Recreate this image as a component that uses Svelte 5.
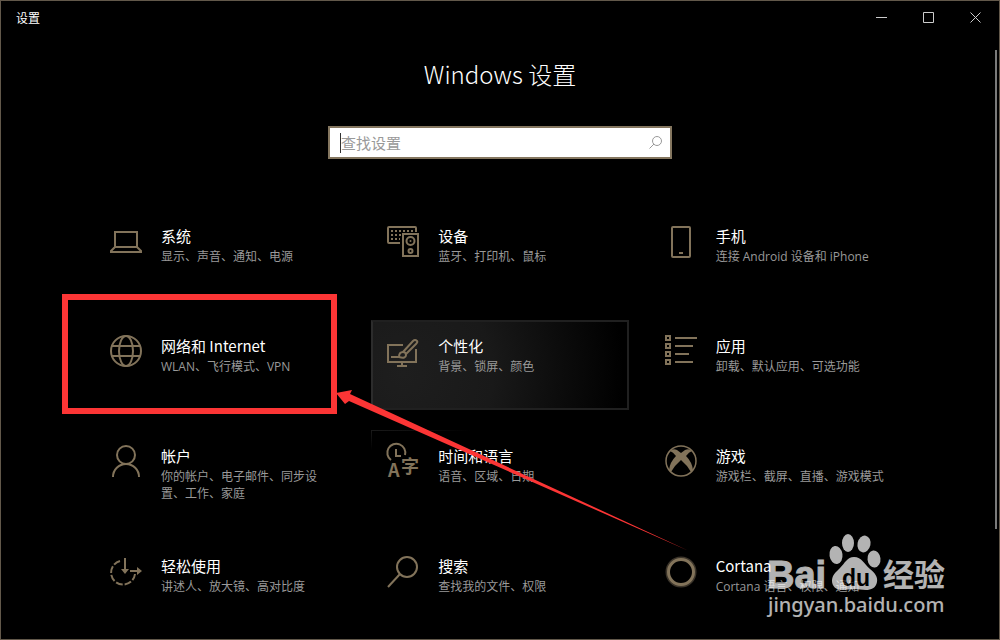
<script lang="ts">
  interface Category {
    icon: string;
    title: string;
    detail: string;
    state?: 'hover' | 'near';
  }

  const categories: Category[] = [
    { icon: 'system', title: '系统', detail: '显示、声音、通知、电源' },
    { icon: 'devices', title: '设备', detail: '蓝牙、打印机、鼠标' },
    { icon: 'phone', title: '手机', detail: '连接 Android 设备和 iPhone' },
    { icon: 'network', title: '网络和 Internet', detail: 'WLAN、飞行模式、VPN' },
    { icon: 'personalize', title: '个性化', detail: '背景、锁屏、颜色', state: 'hover' },
    { icon: 'apps', title: '应用', detail: '卸载、默认应用、可选功能' },
    { icon: 'accounts', title: '帐户', detail: '你的帐户、电子邮件、同步设置、工作、家庭' },
    { icon: 'time', title: '时间和语言', detail: '语音、区域、日期', state: 'near' },
    { icon: 'gaming', title: '游戏', detail: '游戏栏、截屏、直播、游戏模式' },
    { icon: 'ease', title: '轻松使用', detail: '讲述人、放大镜、高对比度' },
    { icon: 'search', title: '搜索', detail: '查找我的文件、权限' },
    { icon: 'cortana', title: 'Cortana', detail: 'Cortana 语言、权限、通知' }
  ];

  let query = $state('');
</script>

{#snippet categoryIcon(name: string)}
  <svg class="icon" viewBox="0 0 32 32" aria-hidden="true">
    {#if name === 'system'}
      <path d="M5 6h22v15H5zM5 21l-4 4v1h30v-1l-4-4" />
    {:else if name === 'devices'}
      <path d="M13 17H2a1 1 0 0 1-1-1V2a1 1 0 0 1 1-1h26a1 1 0 0 1 1 1v4" />
      <path d="M4 5h23M4 9h10M4 13h2M8 13h5" stroke-dasharray="2 2" />
      <path d="M16 8h15v22H16z" />
      <circle cx="23.5" cy="15" r="4" />
      <circle cx="23.5" cy="15" r="1" class="solid" />
      <circle cx="23.5" cy="25" r="2" />
    {:else if name === 'phone'}
      <rect x="7" y="1" width="18" height="30" rx="1" />
      <path d="M14 27h4" />
    {:else if name === 'network'}
      <circle cx="16" cy="15" r="15" />
      <ellipse cx="16" cy="15" rx="7" ry="15" />
      <path d="M2 10h28M2 20h28" />
    {:else if name === 'personalize'}
      <path d="M16 9H1v17h28V13M15 26v4M10 30h10M4 21h8" />
      <path d="M16 16L26 5q2-2 4 0 1 1-1 3L19 18" />
      <path d="M12 21q0-5 4-5 3 0 3 3 0 4-7 2z" />
    {:else if name === 'apps'}
      {#each [0, 8, 16, 24] as y}
        <rect x="1" {y} width="4" height="4" />
      {/each}
      <path d="M10 2h22M10 10h18M10 18h14M10 26h18" />
    {:else if name === 'accounts'}
      <circle cx="16" cy="9" r="9" />
      <path d="M3 31a13 13 0 0 1 26 0" />
    {:else if name === 'time'}
      <path d="M4 14a9 9 0 1 1 14-5M9 3v7h5" />
      <text x="1" y="31" font-size="18">A</text>
      <text x="14" y="27" font-size="18">字</text>
    {:else if name === 'gaming'}
      <circle cx="16" cy="15" r="15" class="thin" />
      <path class="fill" d="M5 5q3-3 7-1l4 3 4-3q4-2 7 1-3 1-6 5 6 6 7 14-1 2-2 2-4-7-10-12Q10 19 6 26q-1 0-2-2 1-8 7-14Q8 6 5 5z" />
    {:else if name === 'ease'}
      <path d="M10 5A12 12 0 1 0 25 18" stroke-dasharray="7 2" />
      <path d="M15 2v12M20 15h8" />
      <path class="fill" d="M11 13h8l-4 5zM27 11v8l5-4z" />
    {:else if name === 'search'}
      <circle cx="20" cy="11" r="10" />
      <path d="M13 18L1 31" />
    {:else}
      <circle cx="16" cy="16" r="14" class="halo" />
      <circle cx="16" cy="16" r="12.5" class="ring" />
    {/if}
  </svg>
{/snippet}

<div class="window">
  <header class="titlebar">
    <span class="app-name">设置</span>
    <div class="controls">
      <button aria-label="最小化">
        <svg viewBox="0 0 11 11"><path d="M0 5.5h11" /></svg>
      </button>
      <button aria-label="最大化">
        <svg viewBox="0 0 11 11"><path d="M.5.5h10v10H.5z" /></svg>
      </button>
      <button aria-label="关闭">
        <svg viewBox="0 0 11 11"><path d="M.5.5l10 10M10.5.5l-10 10" /></svg>
      </button>
    </div>
  </header>

  <main>
    <h1>Windows 设置</h1>

    <label class="search">
      <span class="caret"></span>
      <input type="text" placeholder="查找设置" aria-label="查找设置" bind:value={query} />
      <svg viewBox="0 0 13 13" aria-hidden="true">
        <circle cx="8" cy="5" r="4.5" />
        <path d="M5 8L.5 12.5" />
      </svg>
    </label>

    <nav class="grid">
      {#each categories as category}
        <a class="card {category.state ?? ''}" href="#{category.icon}">
          {@render categoryIcon(category.icon)}
          <span class="text">
            <span class="title">{category.title}</span>
            <span class="detail">{category.detail}</span>
          </span>
        </a>
      {/each}

      <!-- Callout drawn over the network category -->
      <span class="callout"></span>
      <svg class="arrow" viewBox="0 0 356 164" aria-hidden="true">
        <path d="M1 5L17 2 15 6 354 163 14 13 10 16z" />
      </svg>
    </nav>
  </main>

  <span class="scrollbar"></span>

  <svg class="watermark" viewBox="0 0 186 92" role="img" aria-label="Baidu 经验">
    <g>
      <text class="bai" x="3" y="58">Bai</text>
      <ellipse cx="72" cy="25" rx="6.5" ry="9" transform="rotate(-8 72 25)" />
      <ellipse cx="84" cy="13" rx="6" ry="9" />
      <ellipse cx="100" cy="14" rx="6.5" ry="8.5" transform="rotate(12 100 14)" />
      <ellipse cx="110" cy="29" rx="6.5" ry="8.5" transform="rotate(-6 110 29)" />
      <path d="M90 27c8 0 10 7 16 12 5 4 8 8 7 13-1 6-6 8-11 8-4 0-8-1-12-1s-8 1-12 1c-6 0-10-4-10-9 0-6 4-9 8-13 5-5 7-11 14-11z" />
      <text class="du" x="78" y="56">du</text>
      <text class="jingyan" x="119" y="56">经验</text>
      <text class="url" x="4" y="82">jingyan.baidu.com</text>
    </g>
  </svg>
</div>

<style>
  :global(body) {
    margin: 0;
    background: #000;
  }

  .window {
    position: relative;
    box-sizing: border-box;
    min-height: 100vh;
    border: 1px solid #62584a;
    background: #000;
    color: #fff;
    font-family: 'Noto Sans CJK SC', 'Noto Sans', sans-serif;
  }

  .titlebar {
    display: flex;
    align-items: center;
    justify-content: space-between;
    height: 32px;
    padding-left: 15px;
  }

  .app-name {
    font-size: 12px;
  }

  .controls {
    display: flex;
  }

  .controls button {
    display: flex;
    align-items: center;
    justify-content: center;
    width: 47px;
    height: 32px;
    padding: 0;
    border: none;
    background: transparent;
  }

  .controls svg {
    width: 11px;
    height: 11px;
    fill: none;
    stroke: #ccc;
  }

  main {
    display: flex;
    flex-direction: column;
    align-items: center;
    padding: 23px 16px 8px;
  }

  h1 {
    margin: 0 0 34px;
    font-size: 24px;
    font-weight: 300;
    line-height: 36px;
  }

  .search {
    display: flex;
    align-items: center;
    box-sizing: border-box;
    width: 100%;
    max-width: 344px;
    height: 33px;
    padding: 0 8px 0 10px;
    border: 2px solid #84765f;
    background: #fff;
  }

  .caret {
    width: 1px;
    height: 20px;
    background: #333;
  }

  .search input {
    flex: 1;
    min-width: 0;
    padding: 0;
    border: none;
    outline: none;
    background: transparent;
    color: #000;
    font-family: inherit;
    font-size: 15px;
  }

  .search input::placeholder {
    color: #999;
  }

  .search svg {
    width: 13px;
    height: 13px;
    fill: none;
    stroke: #999;
  }

  .grid {
    position: relative;
    display: grid;
    grid-template-columns: repeat(3, minmax(0, 1fr));
    grid-auto-rows: minmax(90px, auto);
    gap: 20px;
    width: 100%;
    max-width: 812px;
    margin-top: 51px;
  }

  .card {
    display: flex;
    gap: 19px;
    box-sizing: border-box;
    padding: 14px;
    border: 2px solid transparent;
    color: inherit;
    text-decoration: none;
  }

  .card.hover {
    border-color: #202020;
    border-left-color: #2c2c2c;
    background: radial-gradient(circle at 12% 60%, #1e1e1e 0, #191919 90px, #000 220px);
  }

  /* Faint edge light next to the hovered card */
  .card.near {
    background:
      linear-gradient(90deg, #1a1a1a, transparent) 0 0 / 100px 1px no-repeat border-box,
      linear-gradient(#1a1a1a, transparent) 0 0 / 1px 20px no-repeat border-box;
    background-origin: border-box;
  }

  .icon {
    flex: none;
    width: 32px;
    height: 32px;
    overflow: visible;
    fill: none;
    stroke: #82735a;
    stroke-width: 2;
  }

  .icon text,
  .icon .solid,
  .icon .fill {
    fill: #82735a;
    stroke: none;
  }

  .icon text {
    font-weight: 700;
  }

  .icon .thin {
    stroke-width: 1.5;
  }

  .icon .halo {
    stroke: #3b342a;
    stroke-width: 3;
  }

  .icon .ring {
    stroke-width: 3;
  }

  .text {
    display: flex;
    flex-direction: column;
    gap: 2px;
  }

  .title {
    font-size: 15px;
    line-height: 20px;
  }

  .detail {
    color: #999;
    font-family: 'Open Sans', 'Noto Sans CJK SC', sans-serif;
    font-size: 12px;
    line-height: 17px;
  }

  .callout {
    position: absolute;
    top: 84px;
    left: -32px;
    box-sizing: border-box;
    width: 275px;
    height: 120px;
    border: 6px solid #fc3535;
  }

  .arrow {
    position: absolute;
    top: 178px;
    left: 241px;
    width: 356px;
    height: 164px;
    fill: #fc3535;
  }

  .scrollbar {
    position: absolute;
    top: 49px;
    right: 2px;
    width: 2px;
    height: 75%;
    background: #7a7a7a;
  }

  .watermark {
    position: absolute;
    right: 49px;
    bottom: 17px;
    width: 186px;
    height: 92px;
    fill: #fff;
  }

  .watermark g {
    opacity: 0.7;
  }

  .bai {
    stroke: #fff;
    font: bold 38px 'Liberation Sans', sans-serif;
  }

  .du {
    fill: #000;
    font: bold 23px 'Liberation Sans', sans-serif;
  }

  .jingyan {
    font: bold 31px 'Noto Sans CJK SC', sans-serif;
  }

  .url {
    font: 500 20px 'Noto Sans', sans-serif;
  }
</style>
